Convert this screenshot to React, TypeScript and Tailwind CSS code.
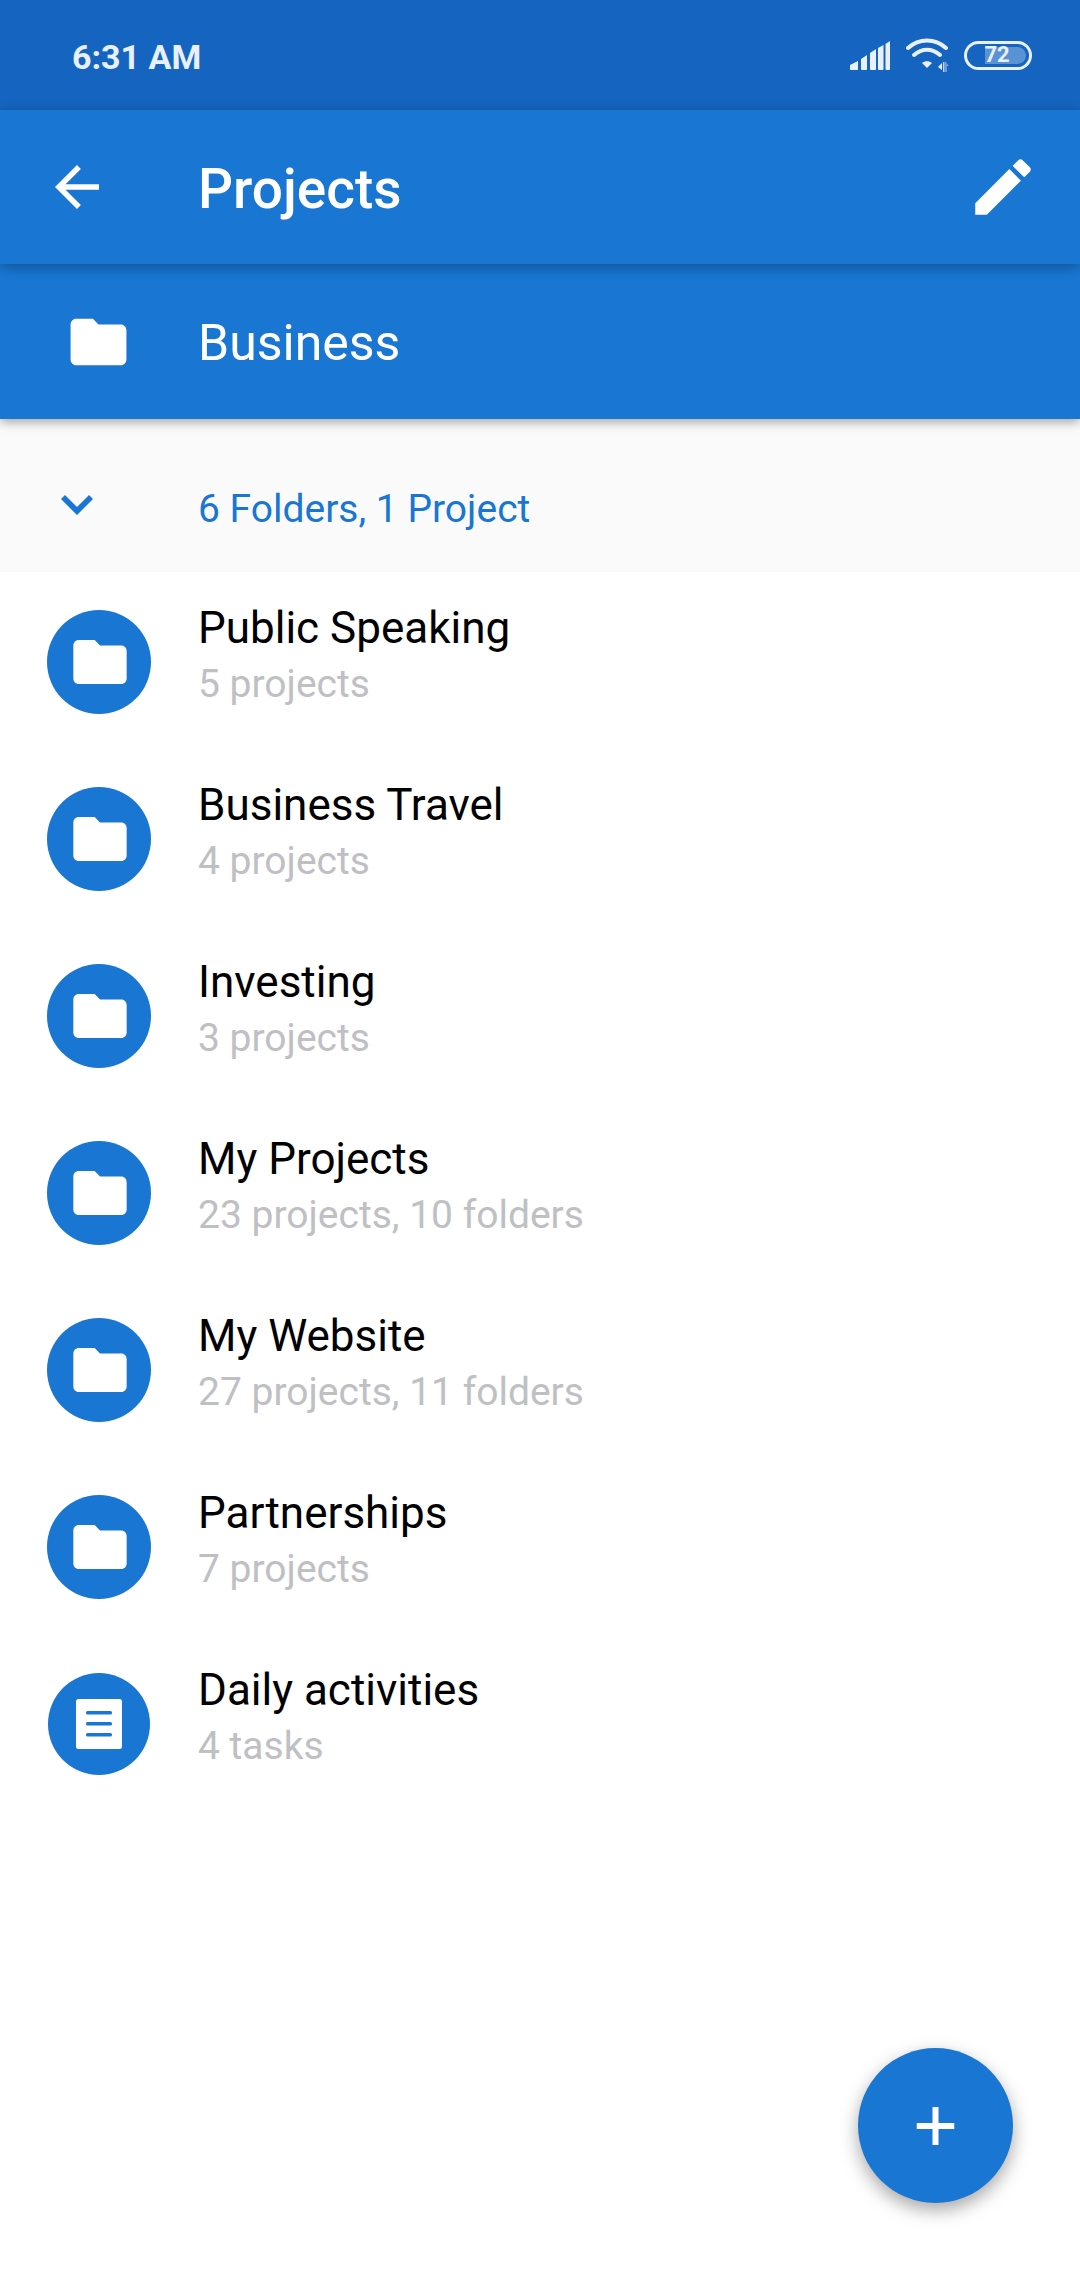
const FOLDER = "M10 4H4c-1.1 0-2 .9-2 2v12c0 1.1.9 2 2 2h16c1.1 0 2-.9 2-2V8c0-1.1-.9-2-2-2h-8l-2-2z";

function Folder({ width, height }: { width: number; height: number }) {
  return (
    <svg width={width} height={height} viewBox="0 0 24 24" preserveAspectRatio="none" fill="#fff" className="block">
      <path d={FOLDER} />
    </svg>
  );
}

const rows = [
  { name: "Public Speaking", sub: "5 projects" },
  { name: "Business Travel", sub: "4 projects" },
  { name: "Investing", sub: "3 projects" },
  { name: "My Projects", sub: "23 projects, 10 folders" },
  { name: "My Website", sub: "27 projects, 11 folders" },
  { name: "Partnerships", sub: "7 projects" },
  { name: "Daily activities", sub: "4 tasks", doc: true },
];

function Row({ name, sub, doc }: { name: string; sub: string; doc?: boolean }) {
  return (
    <div className="flex h-[177px] items-center">
      <div className="flex w-[198px] shrink-0 justify-center pt-[2px]">
        <div className={`flex items-center justify-center rounded-full bg-[#1976d2] ${doc ? "h-[102px] w-[102px]" : "h-[104px] w-[104px]"}`}>
          {doc ? (
            <svg width="46" height="50" viewBox="0 0 46 50" className="block">
              <rect width="46" height="50" rx="2.5" fill="#fff" />
              <rect x="10" y="12" width="26" height="3.500" rx="1.500" fill="#1976d2" />
              <rect x="10" y="23" width="26" height="3.500" rx="1.500" fill="#1976d2" />
              <rect x="10" y="34" width="26" height="3.500" rx="1.500" fill="#1976d2" />
            </svg>
          ) : (
            <span className="ml-[2px]">
              <Folder width={64} height={66} />
            </span>
          )}
        </div>
      </div>
      <div className="-mt-[10px] flex flex-col">
        <span className="h-[57px] text-[44px] leading-[57px] text-black">{name}</span>
        <span className="h-[55px] text-[39px] leading-[55px] text-[#bfc0c4]">{sub}</span>
      </div>
    </div>
  );
}

export default function App() {
  return (
    <div className="relative h-[2280px] w-[1080px] overflow-hidden bg-white font-['Roboto',sans-serif]">
      <div className="flex h-[110px] items-center justify-between bg-[#1565c0] pl-[72px] pr-[48px]">
        <span className="pt-[3px] text-[34px] font-bold leading-none text-[#e8f0fa]">6:31 AM</span>
        <div className="flex items-center">
          <svg width="40" height="29" viewBox="0 0 40 29" fill="#e8f0fa" className="block">
            <path d="M0 24 L8 20 V29 H1 Q0 29 0 28Z" />
            <path d="M11 18 L17 14 V28 Q17 29 16 29 H12 Q11 29 11 28Z" />
            <path d="M20 12 L26 8 V28 Q26 29 25 29 H21 Q20 29 20 28Z" />
            <path d="M28 7 L33.500 4 V28 Q33.500 29 32.500 29 H29 Q28 29 28 28Z" />
            <path d="M35.500 3 L40 0 V28 Q40 29 39 29 H36.500 Q35.500 29 35.500 28Z" />
          </svg>
          <svg width="44" height="34" viewBox="0 0 44 34" fill="none" className="ml-[16px] block">
            <path d="M2 10 C13 0 29 0 40 10" stroke="#e8f0fa" strokeWidth="4" strokeLinecap="round" />
            <path d="M8 17 C16 10 26 10 34 17" stroke="#e8f0fa" strokeWidth="4" strokeLinecap="round" />
            <path d="M16 25 L21 30 L26 25 C23 22.500 19 22.500 16 25Z" fill="#e8f0fa" />
            <path d="M36 25 L32 29 L36 32Z" fill="#e8f0fa" />
            <rect x="37" y="24" width="1.500" height="10" fill="#c5d6ee" />
            <path d="M39 23 L43 28 H39Z M39 28 H41 V34 H39Z" fill="#6d9bd8" />
          </svg>
          <div className="relative ml-[14px] h-[29px] w-[68px] rounded-full border-[3px] border-[#e8f0fa]">
            <div className="absolute bottom-[3px] left-[18px] top-[3px] w-[41px] rounded-r-full bg-[#5a92d6]" />
            <span className="absolute inset-0 flex items-center justify-center pr-[2px] text-[22px] font-bold leading-none text-[#e8f0fa]">
              72
            </span>
          </div>
        </div>
      </div>

      <div className="relative z-20 flex h-[154px] items-center justify-between bg-[#1976d2] shadow-[0_3px_12px_rgba(0,0,0,0.3)]">
        <div className="flex items-center">
          <svg width="66" height="66" viewBox="0 0 24 24" fill="#fff" className="ml-[44px] block">
            <path d="M20 11H7.830l5.590-5.590L12 4l-8 8 8 8 1.410-1.410L7.830 13H20v-2z" />
          </svg>
          <span className="ml-[88px] pt-[5px] text-[55px] font-medium leading-none text-white">Projects</span>
        </div>
        <svg width="74" height="74" viewBox="0 0 24 24" fill="#fff" className="mr-[40px] block">
          <path d="M3 17.250V21h3.750L17.810 9.940l-3.750-3.750L3 17.250zM20.710 7.040c.39-.39.39-1.020 0-1.410l-2.340-2.340c-.39-.39-1.020-.39-1.410 0l-1.830 1.830 3.750 3.750 1.830-1.830z" />
        </svg>
      </div>

      <div className="relative z-10 flex h-[155px] items-center bg-[#1976d2] shadow-[0_3px_10px_rgba(0,0,0,0.35)]">
        <span className="ml-[65px]">
          <Folder width={67} height={70} />
        </span>
        <span className="ml-[66px] pt-[3px] text-[50px] leading-none text-white">Business</span>
      </div>

      <div className="flex h-[153px] items-center bg-[#fafafa] pt-[27px]">
        <svg width="32" height="20" viewBox="0 0 32 20" fill="#1976d2" className="ml-[61px] block -translate-y-[4px]">
          <path d="M4 0 L16 12 L28 0 L32 4 L16 20 L0 4Z" />
        </svg>
        <span className="ml-[105px] text-[39px] leading-none text-[#1976d2]">6 Folders, 1 Project</span>
      </div>

      <div className="flex flex-col">
        {rows.map((r) => (
          <Row key={r.name} {...r} />
        ))}
      </div>

      <div className="absolute left-[858px] top-[2048px] flex h-[155px] w-[155px] items-center justify-center rounded-full bg-[#1976d2] shadow-[0_7px_18px_rgba(0,0,0,0.35)]">
        <svg width="38" height="38" viewBox="0 0 38 38" fill="#fff" className="block -translate-x-[0.5px]">
          <rect x="16" width="6" height="38" />
          <rect y="16" width="38" height="6" />
        </svg>
      </div>
    </div>
  );
}
